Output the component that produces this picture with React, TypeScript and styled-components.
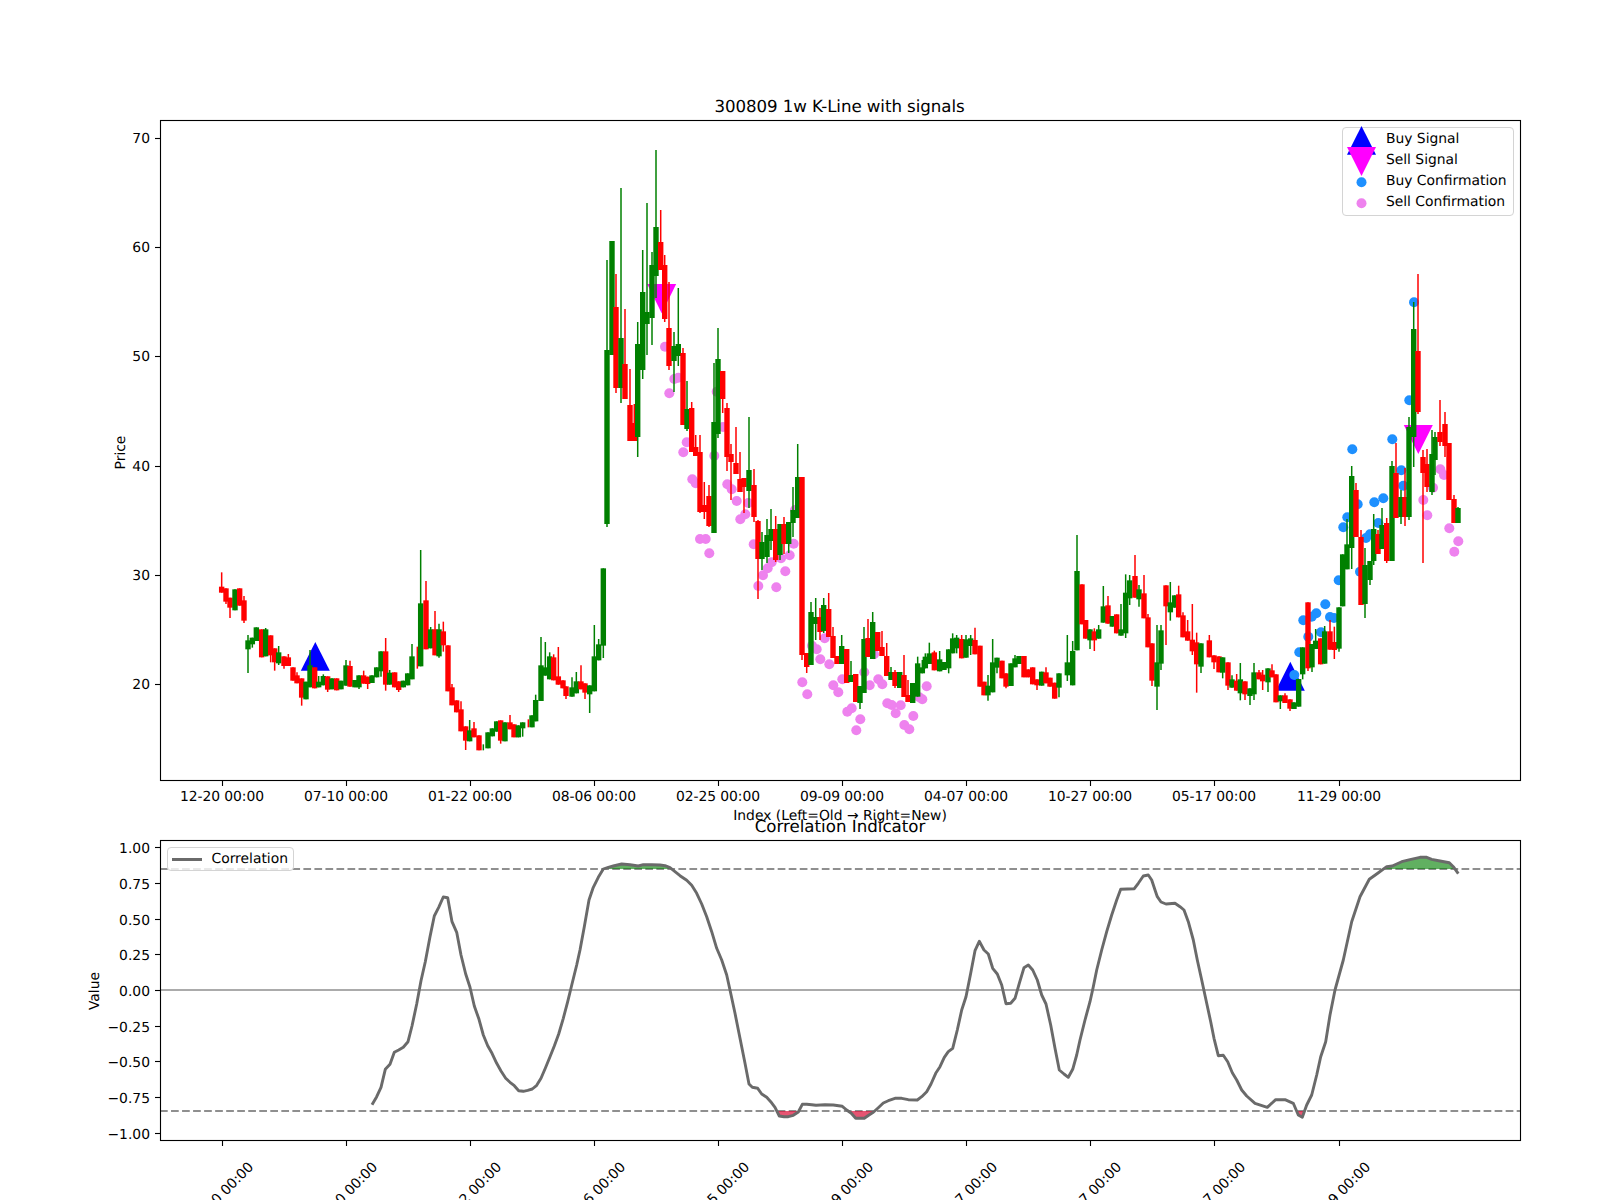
import React from "react";
import styled, { createGlobalStyle } from "styled-components";

type Row = [number, "r" | "g", number, number, number?, number?];

const GlobalStyle = createGlobalStyle`
  html, body { margin: 0; padding: 0; background: #fff; overflow: hidden; }
  body { font-family: "DejaVu Sans", sans-serif; text-rendering: geometricPrecision; }
`;

const Figure = styled.main`
  width: 1600px;
  height: 1200px;
  display: flex;
  flex-direction: column;
  background: #fff;
  overflow: hidden;
`;
const Panel = styled.section<{ $height: number }>`
  position: relative;
  width: 1600px;
  height: ${(p) => p.$height}px;
  flex: none;
`;
const ChartSvg = styled.svg`
  display: block;
  width: 1600px;
  height: 100%;
  overflow: visible;
`;
const Label = styled.text<{ $anchor?: string; $size?: number; $tight?: boolean }>`
  font-family: "DejaVu Sans", sans-serif;
  font-size: ${(p) => p.$size ?? 13.89}px;
  fill: #000;
  text-anchor: ${(p) => p.$anchor ?? "middle"};
  text-rendering: geometricPrecision;
  letter-spacing: ${(p) => (p.$tight ? "-0.07px" : "normal")};
`;
const Spine = styled.rect`
  fill: none;
  stroke: #000;
  stroke-width: 1.11;
`;
const Tick = styled.line`
  stroke: #000;
  stroke-width: 1.11;
`;
const Level = styled.line<{ $dashed?: boolean }>`
  stroke: ${(p) => (p.$dashed ? "#8f8f8f" : "#ababab")};
  stroke-width: 2.08;
  stroke-dasharray: ${(p) => (p.$dashed ? "7.7 3.33" : "none")};
`;
const Trace = styled.path`
  fill: none;
  stroke: #6a6a6a;
  stroke-width: 2.9;
  stroke-linejoin: round;
`;
const Legend = styled.div<{ $left: number; $top: number; $width: number; $padTop?: number; $padBottom?: number }>`
  position: absolute;
  left: ${(p) => p.$left}px;
  top: ${(p) => p.$top}px;
  width: ${(p) => p.$width}px;
  padding: ${(p) => p.$padTop ?? 0}px 0 ${(p) => p.$padBottom ?? 0}px;
  box-sizing: border-box;
  display: flex;
  flex-direction: column;
  background: rgba(255, 255, 255, 0.8);
  border: 1px solid #d4d4d4;
  border-radius: 4px;
`;
const LegendRow = styled.div<{ $height: number }>`
  height: ${(p) => p.$height}px;
  display: flex;
  align-items: center;
  font-size: 13.89px;
  line-height: ${(p) => p.$height}px;
  color: #000;
  white-space: nowrap;
`;
const Swatch = styled.svg`
  width: 29px;
  height: 21px;
  margin: 0 9.6px 0 4px;
  overflow: visible;
  flex: none;
`;
const LineKey = styled.span`
  width: 30px;
  height: 3px;
  margin: 0 9.8px 0 3.4px;
  background: #6a6a6a;
  flex: none;
`;

const seg = (ox: number, oy: number, s: number, rows: Row[]) =>
  rows.map(([x, c, t, b, wt, wb]) => ({
    x: ox + x / s,
    c,
    t: oy + t / s,
    b: oy + b / s,
    wt: oy + (wt ?? t) / s,
    wb: oy + (wb ?? b) / s,
  }));

const candles = [
  ...seg(200, 530, 3, [
    [65,"r",170,188,127,188],[78,"r",175,215,175,222],[90,"r",203,233,203,264],[105,"g",178,241],[119,"r",175,227],[132,"r",211,272,198,279],
    [144,"g",331,358,315,429],[157,"g",323,343,323,353],[169,"g",292,333],[185,"r",298,382],[197,"g",298,379,294,379],[212,"r",316,376,316,397],
    [224,"r",355,397,355,422],[236,"g",367,400,348,405],[252,"r",379,408,379,416],[265,"r",382,408,372,408],[279,"r",412,452],[291,"r",436,460,427,460],
    [305,"r",445,503,445,527],[318,"g",455,508],[330,"g",406,472,360,472],[344,"r",412,475],[356,"g",455,472,438,472],[370,"g",438,466,433,466],
    [383,"r",439,479,439,486],[396,"g",445,478],[410,"r",445,481],[423,"g",452,478],[438,"g",406,467,390,467],[450,"r",408,470,392,470],
    [465,"g",450,472],[477,"g",436,472,436,477],[491,"r",436,461,422,461],[503,"r",440,462,440,477],[516,"g",436,459],[530,"g",412,442],
    [543,"g",364,424,364,440],[557,"r",364,464,324,482],[569,"g",428,464,420,464],[584,"r",427,472],[596,"r",454,480,454,486],[610,"g",452,472],
    [623,"g",430,466],[636,"g",379,448,342,448],[652,"r",350,350,350,416],[662,"g",220,409,60,409],[678,"r",211,358,153,358],[692,"g",298,355,291,355],
    [705,"r",298,376,243,376],[717,"g",298,379,281,383],[730,"r",304,346,275,365],[744,"r",346,484],[756,"r",472,526,462,526],[770,"r",511,547],
    [783,"r",538,604,514,604],[797,"r",589,632,589,660],[809,"g",601,634,570,634],[822,"r",595,622,576,622],[837,"r",616,661],[850,"g",643,643,643,661],
    [864,"g",607,655],[877,"g",595,619],[890,"g",574,605],[902,"r",571,632,571,641],[915,"g",577,634],[930,"r",577,598,555,598],[942,"r",583,622],
    [955,"g",586,622],[968,"g",577,595,577,620],[985,"r",568,568,568,592],[996,"g",556,592],[1007,"g",510,574,494,574],[1023,"g",406,513,321,513],
    [1036,"g",412,437,336,437],[1049,"g",379,448,367,448],[1061,"r",382,451,373,451],[1075,"r",439,464,351,464],[1089,"r",451,475],[1098,"r",469,498,469,507],
    [1116,"g",472,500,442,500],[1129,"g",454,490,426,490],[1143,"r",454,478,406,478],[1155,"r",460,488,460,507],[1169,"g",466,493,466,549],
    [1183,"g",379,484,285,484],[1196,"g",343,391,327,391],[1210,"g",115,347,115,384],
  ]),
  ...seg(0, 0, 1, [
    [607,"g",350,524,260,527],[612,"g",241,355],[616,"r",307,388,274,393],[621,"g",338,388,188,403],[625,"r",364,399,309,399],[630,"r",405,441,369,441],
    [634.3,"r",423,441,404,441],[637.7,"g",344,437,322,457],[642.7,"g",292,370,250,379],[647,"g",312,324,203,355],[652,"g",265,318,252,345],[656,"g",227,276,150,298],
    [660.7,"r",242,270,210,270],[664.7,"r",265,319,255,322],[669,"r",328,366,282,370],[674,"g",346,361,332,392],[678.3,"g",344,356,288,366],[683,"r",353,425,348,425],
    [687,"g",409,429,381,431],[691.7,"r",408,452,402,452],[695.7,"r",447,456,435,456],[700,"r",452,512,435,513],[704.3,"r",505,512,482,519],[709,"r",496,526,485,527],
    [714,"g",422,533,363,533],[718,"g",359,434,328,438],[722.7,"r",371,399,371,413],[727,"r",408,457,403,471],[731,"r",454,462,444,500],[736,"r",463,474,427,474],
    [740,"r",479,492,452,492],[744,"r",478,487,478,513],[749,"g",470,491,417,508],[754,"r",485,517,469,522],[758,"r",521,559,520,599],[762,"g",542,559,532,570],
    [767,"g",535,557,519,563],[771,"g",529,541,509,550],[775.7,"r",529,560,516,562],[780,"g",524,555,524,560],[784,"r",524,544,517,554],[788.7,"g",522,544,522,553],
    [793,"g",510,523,487,537],[797.7,"g",477,518,444,518],[802,"r",477,655,477,660],[806.7,"r",653,667,653,673],[811,"g",612,665,602,665],[815.7,"g",617,624,598,640],
    [820,"r",617,632,608,640],[823.7,"g",605,631,598,633],[828.7,"r",609,637,593,637],[833,"r",636,658,627,658],[837,"r",656,664],[841.7,"g",646,664,635,664],
    [846.7,"r",649,683],[851,"g",675,682,661,682],[855.7,"r",674,702],[860,"g",686,703,686,709],[864,"g",639,693,627,693],[868,"r",638,657,619,657],
    [872.7,"g",622,659,612,659],[877.7,"r",632,651],[882,"r",647,656,631,656],[886.7,"r",656,676,643,676],[891,"g",672,680,667,680],[895,"r",672,686,670,688],
    [899.7,"g",672,688],[904,"r",675,697,655,697],[908,"r",695,702,680,702],[912.7,"g",683,703],
  ]),
  ...seg(790, 590, 3, [
    [383,"g",220,320,200,320],[397,"g",232,250,210,250],[406,"g",200,235,190,235],[418,"g",190,222,158,222],[433,"r",187,241,182,241],[449,"g",208,244,183,244],
    [462,"g",216,240],[476,"g",178,235,178,250],[488,"g",145,190,130,190],[500,"g",143,175,135,190],[515,"r",147,205,135,205],[528,"g",148,203,135,203],
    [542,"g",145,168,135,195],[555,"r",150,193,113,193],[570,"r",167,290],[582,"r",275,316],[594,"g",287,316,255,332],[608,"g",217,307,147,307],
    [621,"g",203,233,203,250],[636,"r",212,265],[648,"r",250,290,250,295],[663,"g",220,288],[675,"g",205,232,195,232],[687,"g",198,222],[702,"r",198,262],
    [715,"r",238,262],[728,"r",232,283],[741,"r",268,286,268,300],[755,"g",245,287],[768,"r",247,280,232,280],[780,"r",263,290],[794,"r",278,326],[807,"g",250,293,250,322],
  ]),
  ...seg(1060, 520, 3, [
    [22,"g",427,466,345,483],[38,"g",393,496,363,496],[51,"g",153,391,45,391],[66,"r",193,313],[77,"r",300,356],[90,"g",328,361,328,387],[103,"r",334,361,325,393],
    [116,"g",328,356,315,356],[130,"g",259,308,198,308],[144,"r",256,311,228,311],[157,"g",288,320],[170,"r",283,340],[183,"g",328,347,252,347],[197,"g",218,340,163,354],
    [209,"g",181,235,165,255],[225,"r",168,233,105,233],[237,"g",208,238,195,260],[252,"r",220,295,165,295],[264,"r",292,382,282,382],[276,"r",370,482,370,498],
    [291,"g",427,500,315,570],[303,"g",331,431,315,450],[318,"r",196,259,196,375],[331,"g",247,277,186,302],[344,"g",226,263],[356,"r",223,292,197,292],[369,"r",286,352,277,352],
    [383,"r",334,362,300,362],[397,"r",359,394,252,405],[410,"r",367,433,338,518],[423,"g",370,440,370,459],[448,"r",361,412,345,412],[462,"r",406,427,406,447],
    [477,"r",409,457],[488,"g",412,458,412,475],[504,"r",427,497,427,510],[516,"g",478,503,466,503],[530,"r",482,512,462,512],[541,"g",478,520,429,541],[555,"r",484,523,484,540],
    [570,"g",505,528,505,555],[582,"g",457,523,429,540],[597,"r",457,478,450,478],[608,"r",464,484,450,510],[624,"g",445,487,445,516],[636,"r",451,472,433,472],
    [648,"r",463,547],[661,"g",526,544,526,567],[675,"r",526,549,520,549],[690,"r",538,566,538,573],[702,"g",547,567],[716,"g",477,560],
  ]),
  ...seg(1260, 520, 3, [
    [128,"g",382,463,382,478],[144,"r",247,445,247,453],[156,"g",372,442,372,456],[167,"g",362,387,327,387],[182,"r",355,433],[194,"g",334,431,318,431],[210,"r",334,389,300,389],
    [223,"r",366,390,320,417],[237,"g",262,386,262,395],[248,"g",103,259],[261,"g",73,148,-3,148],
  ]),
  ...seg(0, 0, 1, [
    [1351.7,"g",476,548,466,569],[1356,"r",490,537,483,537],[1361,"r",537,605,530,605],[1365,"g",565,604,548,618],[1370,"g",561,580,561,585],[1373.7,"g",529,561,514,565],
    [1378,"r",534,554,530,554],[1382,"g",525,549,508,549],[1386.7,"r",523,561,518,563],[1392,"g",466,561,461,561],[1396,"r",473,518,443,518],[1401,"g",497,517,490,524],
    [1405,"r",497,517,468,526],[1409,"g",427,517,417,520],[1413.7,"g",329,437,302,467],[1418,"r",351,412,274,414],[1423,"r",457,473,450,563],[1427,"r",464,487,449,492],
    [1432,"g",454,492,430,495],[1435,"g",437,460,432,475],[1440,"r",432,442,400,446],[1445,"r",424,446,412,457],[1449,"r",443,500],[1454,"r",499,523,495,523],[1458,"g",508,523,507,523],
  ]),
];

const pink: [number, number][] = [
  [665,346.7],[669.3,393.3],[674.3,379],[678.3,377.7],[683.3,452.3],[686.7,442.3],[692.3,479.3],[695.7,483.3],[700,539],[705.7,539],[709.3,553.3],[714.3,455.7],[716.7,391.7],
  [723,427],[727.3,484.3],[731.7,489.3],[736.7,501],[740.3,519.3],[745.3,514.3],[748.3,503],[753.7,544.3],[758.3,586],[763,575.3],[767.7,568.3],[771.7,562.3],[776.3,587.3],
  [781,558.3],[785.3,571.3],[789.7,555.3],[793.7,543.7],[795,510],[802.3,682.3],[807.3,694.3],[812,645.7],[816.7,649.3],[820.3,659.3],[824.7,638.3],[829.3,664.3],[833.3,685.3],
  [838.3,692.3],[842.3,679.3],[847.3,711.7],[851.7,708.3],[856.3,730.3],[860.3,719.3],[864.3,672.3],[869.7,685.3],[874,654.3],[878.3,679.3],[882.3,684.3],[887.3,703.3],
  [891.7,705],[895.7,713.3],[900.7,705.3],[904.3,725],[909.3,729.3],[913.3,716],[919.3,697.3],[922.3,699.3],[926.7,686.3],
  [1423.3,500],[1427.3,515.3],[1433,487.7],[1440.3,469.3],[1444,475],[1449.3,528.3],[1458.3,541.3],[1454.3,551.7],
];
const blue: [number, number][] = [
  [1294.3,675],[1299.3,652.3],[1308.3,636.7],[1321,632.3],[1303.3,620.3],[1311.7,616.7],[1316.3,613.3],[1325.3,604.3],[1330,617],[1334,618],[1338.7,580.3],[1360,571.7],
  [1343.3,527.3],[1347.3,517.3],[1352.3,449.3],[1357.7,504.3],[1366,538],[1370,534.3],[1374.3,502.3],[1378.3,523],[1383.3,498.3],[1392.3,439.3],[1401.3,470.3],[1403.3,485.7],[1409.3,400.3],[1414,302.3],
];

const mapPts = (ox: number, oy: number, pts: number[][]) => pts.map(([x, y]) => [ox + x / 3, oy + y / 3]);
const trace = [
  ...mapPts(80, 780, [
    [876,974],[890,950],[903,922],[916,868],[930,853],[943,817],[956,810],[970,802],[984,785],[996,738],[1010,672],[1023,602],[1036,545],[1050,470],[1063,408],[1076,382],[1090,351],[1103,353],[1116,425],[1130,457],
    [1143,525],[1157,582],[1170,622],[1183,678],[1197,718],[1210,765],[1223,797],[1236,820],[1250,850],[1263,873],[1277,895],[1290,907],[1303,917],[1316,932],[1330,934],[1343,931],[1357,927],[1370,916],[1383,895],
    [1396,865],[1410,830],[1423,798],[1436,762],[1450,715],[1463,665],[1476,612],[1490,555],
  ]),
  ...mapPts(580, 780, [
    [0,510],[13,440],[27,360],[40,322],[55,292],[70,267],[85,262],[100,258],[125,252],[150,254],[175,258],[190,254],[215,254],[240,255],[255,257],[270,263],[285,275],[300,287],[320,301],[335,316],[350,340],[365,372],
    [380,410],[395,455],[410,505],[425,540],[440,585],[450,630],[465,700],[480,775],[495,850],[507,912],[517,922],[533,925],[545,942],[560,952],[572,965],[585,982],[598,1008],[612,1010],[625,1010],[640,1006],[655,996],
    [667,973],[680,973],[695,974],[708,976],[735,974],[760,975],[787,979],[800,990],[814,1000],[827,1015],[853,1015],[867,1005],[880,997],[895,983],[910,969],[925,962],[945,955],[965,955],[985,959],[1012,960],[1025,950],
    [1040,935],[1053,912],[1067,880],[1080,860],[1093,832],[1105,815],[1118,805],[1132,750],[1145,690],[1158,650],[1172,580],[1185,512],[1198,484],[1212,510],[1225,522],[1238,565],[1252,582],[1265,615],[1278,671],
    [1292,670],[1305,655],[1318,610],[1332,563],[1345,555],[1358,570],[1372,600],[1385,645],[1398,672],[1412,735],[1425,805],[1438,870],[1452,882],[1465,892],[1478,868],[1490,825],
  ]),
  ...mapPts(1080, 780, [
    [0,780],[15,720],[30,665],[40,620],[50,570],[65,510],[80,455],[95,405],[110,360],[122,328],[163,326],[175,310],[190,288],[205,285],[215,300],[225,330],[232,350],[243,366],[258,372],[285,370],[300,380],[312,390],
    [325,425],[340,480],[352,540],[365,600],[378,660],[392,725],[402,775],[415,827],[430,826],[443,845],[457,878],[470,900],[485,930],[500,948],[525,970],[562,982],[587,959],[615,959],[640,970],[655,1005],[667,1012],
    [680,975],[695,945],[710,885],[722,830],[737,785],[750,705],[765,630],[790,540],[815,425],[840,350],[868,298],[893,280],[920,260],[937,258],[965,245],[990,239],[1020,232],[1040,232],[1055,238],[1080,243],[1108,248],
    [1120,260],[1135,281],
  ]),
];
const tracePath = trace.map(([x, y], i) => `${i ? "L" : "M"}${x.toFixed(1)} ${y.toFixed(1)}`).join("");
const first = trace[0][0].toFixed(1);
const last = trace[trace.length - 1][0].toFixed(1);

const dates = ["12-20 00:00","07-10 00:00","01-22 00:00","08-06 00:00","02-25 00:00","09-09 00:00","04-07 00:00","10-27 00:00","05-17 00:00","11-29 00:00"];
const tickX = [222.5,346.5,470.5,594.5,718.5,842.5,966.5,1090.5,1214.5,1339.5];
const priceTicks = [70,60,50,40,30,20];
const priceY = (p: number) => Math.floor(684.8 - (p - 20) * 10.93) + 0.5;
const corrTicks = [1,0.75,0.5,0.25,0,-0.25,-0.5,-0.75,-1];
const corrY = (v: number) => Math.floor(990.5 - v * 142.8) + 0.5;
const fmtCorr = (v: number) => (v < 0 ? "\u2212" : "") + Math.abs(v).toFixed(2);

const tri = (x: number, tip: number, base: number) => `${x - 14.5},${base} ${x},${tip} ${x + 14.5},${base}`;

function PriceChart() {
  return (
    <Panel $height={826}>
      <ChartSvg viewBox="0 0 1600 826">
        <Label x={839.5} y={112} $size={16.67} $tight>300809 1w K-Line with signals</Label>
        <polygon points={tri(315.3, 642, 670.7)} fill="#0000ff" />
        <polygon points={tri(1290.3, 661.7, 690.7)} fill="#0000ff" />
        <polygon points={tri(661.7, 313.3, 284)} fill="#ff00ff" />
        <polygon points={tri(1418.3, 454, 425)} fill="#ff00ff" />
        {pink.map(([x, y]) => <circle key={`${x}-${y}`} cx={x} cy={y} r={5} fill="#ee82ee" />)}
        {blue.map(([x, y]) => <circle key={`${x}-${y}`} cx={x} cy={y} r={5} fill="#1e90ff" />)}
        {candles.map((k) => {
          const color = k.c === "r" ? "#ff0000" : "#008000";
          return (
            <g key={k.x}>
              <line x1={k.x} x2={k.x} y1={k.wt} y2={k.wb} stroke={color} strokeWidth={1.5} />
              <rect x={k.x - 2.7} y={k.t} width={5.4} height={k.b - k.t} fill={color} />
            </g>
          );
        })}
        <Spine x={160.5} y={120.5} width={1360} height={660} />
        {priceTicks.map((p) => (
          <g key={p}>
            <Tick x1={155} x2={160} y1={priceY(p)} y2={priceY(p)} />
            <Label x={150} y={priceY(p) + 4.8} $anchor="end">{p}</Label>
          </g>
        ))}
        {tickX.map((x, i) => (
          <g key={x}>
            <Tick x1={x} x2={x} y1={781} y2={786} />
            <Label x={x - 0.5} y={801} $tight>{dates[i]}</Label>
          </g>
        ))}
        <Label transform="rotate(-90 125 452.5)" x={125} y={452.5}>Price</Label>
        <Label x={840} y={819.5}>Index (Left=Old → Right=New)</Label>
      </ChartSvg>
      <Legend $left={1342.3} $top={127.3} $width={172} $padTop={1} $padBottom={1.4}>
        <LegendRow $height={21}>
          <Swatch viewBox="0 0 29 21"><polygon points="0,25.7 14.5,-3 29,25.7" fill="#0000ff" /></Swatch>
          Buy Signal
        </LegendRow>
        <LegendRow $height={21}>
          <Swatch viewBox="0 0 29 21"><polygon points="0,-3 14.5,26 29,-3" fill="#ff00ff" /></Swatch>
          Sell Signal
        </LegendRow>
        <LegendRow $height={21}>
          <Swatch viewBox="0 0 29 21"><circle cx={14.5} cy={11.3} r={5} fill="#1e90ff" /></Swatch>
          Buy Confirmation
        </LegendRow>
        <LegendRow $height={21}>
          <Swatch viewBox="0 0 29 21"><circle cx={14.5} cy={11.3} r={5} fill="#ee82ee" /></Swatch>
          Sell Confirmation
        </LegendRow>
      </Legend>
    </Panel>
  );
}

function CorrelationChart() {
  return (
    <Panel $height={374}>
      <ChartSvg viewBox="0 826 1600 374">
        <defs>
          <clipPath id="overbought"><rect x={160} y={841} width={1360} height={28} /></clipPath>
          <clipPath id="oversold"><rect x={160} y={1111} width={1360} height={29} /></clipPath>
        </defs>
        <Label x={840} y={831.7} $size={16.67}>Correlation Indicator</Label>
        <Level x1={160} x2={1520} y1={990} y2={990} />
        <Level $dashed x1={160} x2={1520} y1={869} y2={869} />
        <Level $dashed x1={160} x2={1520} y1={1111} y2={1111} />
        <path d={`${tracePath}L${last} 869L${first} 869Z`} fill="#008000" fillOpacity={0.62} clipPath="url(#overbought)" />
        <path d={`${tracePath}L${last} 1111L${first} 1111Z`} fill="#dc143c" fillOpacity={0.72} clipPath="url(#oversold)" />
        <Trace d={tracePath} />
        <Spine x={160.5} y={840.5} width={1360} height={300} />
        {corrTicks.map((v) => (
          <g key={v}>
            <Tick x1={155} x2={160} y1={corrY(v)} y2={corrY(v)} />
            <Label x={150} y={corrY(v) + 5.2} $anchor="end">{fmtCorr(v)}</Label>
          </g>
        ))}
        {tickX.map((x, i) => (
          <g key={x}>
            <Tick x1={x} x2={x} y1={1141} y2={1146} />
            <Label transform={`rotate(-45 ${x - 1.5} 1194)`} x={x - 1.5} y={1199} $tight>{dates[i]}</Label>
          </g>
        ))}
        <Label transform="rotate(-90 99 991)" x={99} y={991}>Value</Label>
      </ChartSvg>
      <Legend $left={167.3} $top={21} $width={127} $padTop={1}>
        <LegendRow $height={21}>
          <LineKey />
          Correlation
        </LegendRow>
      </Legend>
    </Panel>
  );
}

export default function App() {
  return (
    <Figure>
      <GlobalStyle />
      <PriceChart />
      <CorrelationChart />
    </Figure>
  );
}
